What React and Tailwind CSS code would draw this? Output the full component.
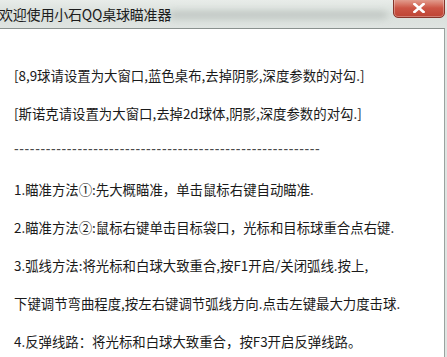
import React from "react";

const lines = [
  "[8,9球请设置为大窗口,蓝色桌布,去掉阴影,深度参数的对勾.]",
  "[斯诺克请设置为大窗口,去掉2d球体,阴影,深度参数的对勾.]",
  null,
  "1.瞄准方法①:先大概瞄准，单击鼠标右键自动瞄准.",
  "2.瞄准方法②:鼠标右键单击目标袋口，光标和目标球重合点右键.",
  "3.弧线方法:将光标和白球大致重合,按F1开启/关闭弧线.按上,",
  "下键调节弯曲程度,按左右键调节弧线方向.点击左键最大力度击球.",
  "4.反弹线路：将光标和白球大致重合，按F3开启反弹线路。",
];

export default function App() {
  return (
    <div
      className="relative w-[447px] h-[357px] overflow-hidden bg-[#dfe5e2] flex flex-col"
      style={{ fontFamily: '"Noto Sans CJK SC", "Liberation Sans", sans-serif' }}
    >
      {/* title bar */}
      <div className="relative h-[28px] shrink-0 bg-gradient-to-b from-[#e8ece9] via-[#d9dfdb] to-[#dfe4e1] flex items-center">
        <div className="absolute left-[170px] right-[60px] top-[11px] h-[8px] rounded-full bg-[#b9c0bc] blur-[3px] opacity-70" />
        <span className="relative ml-[-1px] text-[14px] leading-none text-[#1c1c1c] tracking-[-0.2px]">
          欢迎使用小石QQ桌球瞄准器
        </span>
      </div>

      {/* close button */}
      <div className="absolute top-[-2px] left-[393px] w-[52px] h-[20px] rounded-b-[5px] border border-[#86352a] bg-gradient-to-b from-[#e3a496] via-[#cc5545] to-[#bd4434] flex items-center justify-center shadow-[inset_0_0_0_1px_rgba(255,255,255,0.3)]">
        <svg width="12" height="10" viewBox="0 0 12 10">
          <path d="M1.5 1 L10.5 9 M10.5 1 L1.5 9" stroke="#fff" strokeWidth="2.6" strokeLinecap="square" />
        </svg>
      </div>

      {/* content */}
      <div className="flex flex-1 min-h-0 pr-[2px]">
        <div className="flex-1 bg-white border-t border-[#8a918e] border-r border-r-[#9aa39f] pt-[27px] pl-[14px] text-[13.4px] text-[#1a1a1a] leading-[38px]">
          {lines.map((t, i) =>
            t === null ? (
              <div
                key={i}
                className="h-[38px] leading-[34px] text-[#4a4a4a] tracking-[0.62px]"
                style={{ fontFamily: '"Liberation Sans", sans-serif', fontSize: "14px" }}
              >
                {"-".repeat(58)}
              </div>
            ) : (
              <div key={i} className="whitespace-nowrap">
                {t}
              </div>
            )
          )}
        </div>
      </div>
    </div>
  );
}
